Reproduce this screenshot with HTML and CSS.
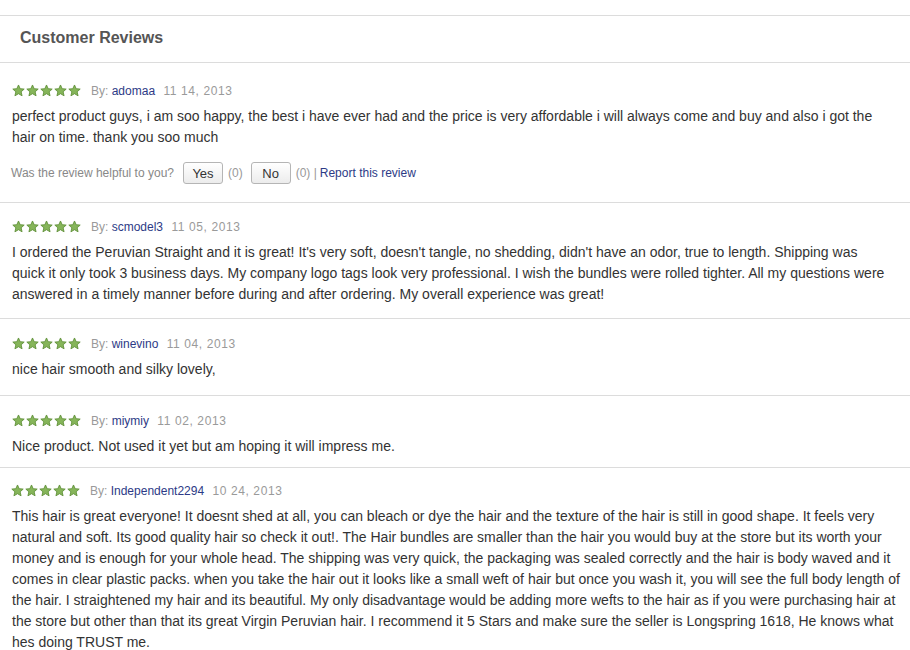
FILE: index.html
```html
<!DOCTYPE html>
<html>
<head>
<meta charset="utf-8">
<link rel="stylesheet" href="styles.css">
</head>
<body>
<svg width="0" height="0" class="defs">
  <defs>
    <symbol id="star" viewBox="0 0 24 24">
      <path d="M12 1.8l3.1 6.9 7.4.7-5.6 5 1.7 7.4L12 17.9l-6.6 3.9 1.7-7.4-5.6-5 7.4-.7z" fill="#86b55a" stroke="#5e8f36" stroke-width="1.6" stroke-linejoin="round"/>
    </symbol>
  </defs>
</svg>
<div class="reviews">
  <div class="head">Customer Reviews</div>

  <div class="review r1">
    <div class="meta">
      <span class="stars"><svg><use href="#star"/></svg><svg><use href="#star"/></svg><svg><use href="#star"/></svg><svg><use href="#star"/></svg><svg><use href="#star"/></svg></span><span class="by">By:</span> <a class="name">adomaa</a> <span class="date">11 14, 2013</span>
    </div>
    <p class="text">perfect product guys, i am soo happy, the best i have ever had and the price is very affordable i will always come and buy and also i got the<br>hair on time. thank you soo much</p>
    <div class="helpful">
      <span class="q">Was the review helpful to you?</span>
      <button class="btn">Yes</button><span class="count">(0)</span>
      <button class="btn">No</button><span class="count">(0) |</span>
      <a class="report">Report this review</a>
    </div>
  </div>

  <div class="review r2">
    <div class="meta">
      <span class="stars"><svg><use href="#star"/></svg><svg><use href="#star"/></svg><svg><use href="#star"/></svg><svg><use href="#star"/></svg><svg><use href="#star"/></svg></span><span class="by">By:</span> <a class="name">scmodel3</a> <span class="date">11 05, 2013</span>
    </div>
    <p class="text">I ordered the Peruvian Straight and it is great! It's very soft, doesn't tangle, no shedding, didn't have an odor, true to length. Shipping was<br>quick it only took 3 business days. My company logo tags look very professional. I wish the bundles were rolled tighter. All my questions were<br>answered in a timely manner before during and after ordering. My overall experience was great!</p>
  </div>

  <div class="review r3">
    <div class="meta">
      <span class="stars"><svg><use href="#star"/></svg><svg><use href="#star"/></svg><svg><use href="#star"/></svg><svg><use href="#star"/></svg><svg><use href="#star"/></svg></span><span class="by">By:</span> <a class="name">winevino</a> <span class="date">11 04, 2013</span>
    </div>
    <p class="text">nice hair smooth and silky lovely,</p>
  </div>

  <div class="review r4">
    <div class="meta">
      <span class="stars"><svg><use href="#star"/></svg><svg><use href="#star"/></svg><svg><use href="#star"/></svg><svg><use href="#star"/></svg><svg><use href="#star"/></svg></span><span class="by">By:</span> <a class="name">miymiy</a> <span class="date">11 02, 2013</span>
    </div>
    <p class="text">Nice product. Not used it yet but am hoping it will impress me.</p>
  </div>

  <div class="review r5">
    <div class="meta">
      <span class="stars"><svg><use href="#star"/></svg><svg><use href="#star"/></svg><svg><use href="#star"/></svg><svg><use href="#star"/></svg><svg><use href="#star"/></svg></span><span class="by">By:</span> <a class="name">Independent2294</a> <span class="date">10 24, 2013</span>
    </div>
    <p class="text">This hair is great everyone! It doesnt shed at all, you can bleach or dye the hair and the texture of the hair is still in good shape. It feels very<br>natural and soft. Its good quality hair so check it out!. The Hair bundles are smaller than the hair you would buy at the store but its worth your<br>money and is enough for your whole head. The shipping was very quick, the packaging was sealed correctly and the hair is body waved and it<br>comes in clear plastic packs. when you take the hair out it looks like a small weft of hair but once you wash it, you will see the full body length of<br>the hair. I straightened my hair and its beautiful. My only disadvantage would be adding more wefts to the hair as if you were purchasing hair at<br>the store but other than that its great Virgin Peruvian hair. I recommend it 5 Stars and make sure the seller is Longspring 1618, He knows what<br>hes doing TRUST me.</p>
  </div>
</div>
</body>
</html>
```

FILE: styles.css
```css
html, body {
  margin: 0;
  padding: 0;
  background: #fff;
}
body {
  font-family: "Liberation Sans", Arial, sans-serif;
  color: #333;
  overflow: hidden;
}
.defs {
  position: absolute;
  width: 0;
  height: 0;
}
.reviews {
  margin-top: 15px;
  border-top: 1px solid #dcdcdc;
}
.head {
  font-size: 16px;
  font-weight: bold;
  color: #555;
  line-height: 20px;
  padding: 12px 20px 14px;
  border-bottom: 1px solid #dcdcdc;
}
.review {
  padding: 14px 5px 13px 12px;
  border-bottom: 1px solid #dcdcdc;
}
.review.r1 {
  padding-top: 18px;
  padding-bottom: 18px;
}
.review.r3 {
  padding-top: 15px;
  padding-bottom: 15px;
}
.review.r4 {
  padding-top: 15px;
  padding-bottom: 10px;
}
.review.r5 {
  padding-top: 13px;
  padding-left: 11px;
  border-bottom: none;
}
.meta {
  height: 20px;
  line-height: 20px;
  font-size: 12px;
  white-space: nowrap;
}
.stars {
  display: inline-flex;
  gap: 1px;
  margin-right: 10px;
  vertical-align: -2px;
}
.stars svg {
  width: 13px;
  height: 13px;
}
.by {
  color: #999;
}
.name {
  color: #2d3a86;
}
.date {
  color: #9a9a9a;
  letter-spacing: 0.6px;
  margin-left: 5px;
}
.text {
  margin: 5px 0 0;
  font-size: 14px;
  line-height: 21px;
  white-space: nowrap;
}
.r5 .text {
  margin-left: 1px;
}
.helpful {
  display: flex;
  align-items: center;
  margin-top: 14px;
  font-size: 12px;
  color: #888;
  height: 22px;
}
.helpful .q {
  margin-right: 9px;
  margin-left: -1px;
}
.btn {
  font-family: "Liberation Sans", Arial, sans-serif;
  font-size: 13px;
  color: #333;
  height: 22px;
  width: 40px;
  padding: 0;
  border: 1px solid #b5b5b5;
  border-radius: 3px;
  background: linear-gradient(#ffffff, #ececec);
  margin: 0 5px 0 0;
}
.count {
  color: #999;
  margin-right: 8px;
}
.report {
  color: #2d3a86;
  margin-left: -5px;
}
```
